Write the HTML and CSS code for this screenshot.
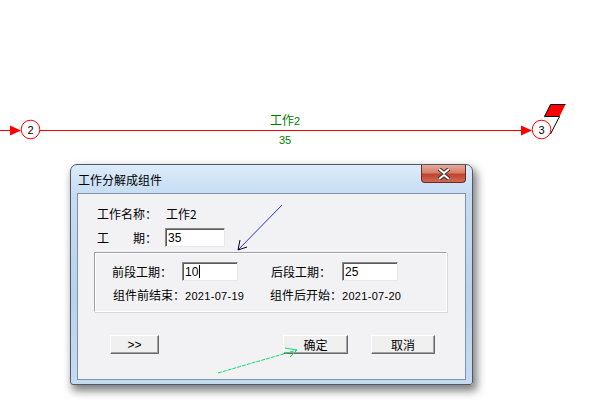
FILE: index.html
```html
<!DOCTYPE html>
<html lang="zh-CN">
<head>
<meta charset="UTF-8">
<title>工作分解成组件</title>
<link rel="stylesheet" href="styles.css">
</head>
<body>

<div class="desk">
    <!-- network diagram -->
    <svg class="net" width="591" height="410" viewBox="0 0 591 410">
        <line x1="0" y1="130.5" x2="12" y2="130.5" stroke="#ff0000" stroke-width="1"/>
        <polygon points="10,125.5 21,130.5 10,135.5" fill="#ff0000"/>
        <line x1="40" y1="130.5" x2="524" y2="130.5" stroke="#ff0000" stroke-width="1"/>
        <polygon points="521,125.5 532,130.5 521,135.5" fill="#ff0000"/>
        <circle cx="30.5" cy="129.5" r="9.3" fill="#fff" stroke="#ff0000" stroke-width="1"/>
        <text x="30.5" y="133.5" class="node-no">2</text>
        <circle cx="541.5" cy="129.5" r="9.3" fill="#fff" stroke="#ff0000" stroke-width="1"/>
        <text x="541.5" y="133.5" class="node-no">3</text>
        <polygon points="550.5,104.5 565.5,104.5 559.5,116.5 544.5,116.5" fill="#ff0000"/>
        <polyline points="544.5,116.5 550.5,104.5 565.5,104.5" fill="none" stroke="#000" stroke-width="1"/>
        <line x1="544.5" y1="116.5" x2="559.5" y2="116.5" stroke="#000" stroke-width="1"/>
        <line x1="559.5" y1="116.5" x2="550.5" y2="134" stroke="#000" stroke-width="1"/>
        <text x="270" y="125" class="job-name">工作<tspan class="job-no">2</tspan></text>
        <text x="279" y="144" class="job-days">35</text>
    </svg>

    <div class="dlg">
        <div class="dlg-title">
            <span class="dlg-caption">工作分解成组件</span>
            <div class="dlg-close">
                <svg width="16" height="12" viewBox="0 0 16 12">
                    <path d="M3 1 L8 5 L13 1 M3 11 L8 7 L13 11" fill="none" stroke="#3a2a2a" stroke-width="4"/>
                    <path d="M3 1 L8 5 L13 1 M3 11 L8 7 L13 11" fill="none" stroke="#fff" stroke-width="2"/>
                </svg>
            </div>
        </div>
        <div class="dlg-body">
            <div class="row">
                <span class="lbl">工作名称：</span>
                <span class="val">工作2</span>
            </div>
            <div class="row">
                <span class="lbl">工　　期：</span>
                <span class="edit edit-wide">35</span>
            </div>

            <div class="grp">
                <div class="grp-row">
                    <span class="lbl-a">前段工期：</span>
                    <span class="edit">10<span class="caret"></span></span>
                    <span class="lbl-b">后段工期：</span>
                    <span class="edit">25</span>
                </div>
                <div class="grp-row grp-dates">
                    <span class="date-a">组件前结束：<span class="num">2021-07-19</span></span>
                    <span>组件后开始：<span class="num">2021-07-20</span></span>
                </div>
            </div>

            <div class="btns">
                <button class="btn btn-more">&gt;&gt;</button>
                <button class="btn btn-ok">确定</button>
                <button class="btn btn-cancel">取消</button>
            </div>
        </div>
    </div>

    <!-- hand drawn hint arrows lying over the dialog -->
    <svg class="marks" width="591" height="410" viewBox="0 0 591 410">
        <line x1="282" y1="205" x2="238" y2="250" stroke="#2a2aff" stroke-width="1"/>
        <polyline points="240,240 238,250 247,247" fill="none" stroke="#000" stroke-width="1"/>
        <line x1="218" y1="373" x2="297" y2="350" stroke="#10e070" stroke-width="1" stroke-dasharray="4 1"/>
        <polyline points="285,348 297,350 290,357" fill="none" stroke="#10e070" stroke-width="1"/>
    </svg>
</div>

</body>
</html>
```

FILE: styles.css
```css
body {
    margin: 0;
    padding: 0;
    background-color: #fff;
    font-family: "Noto Sans CJK SC", "Liberation Sans", sans-serif;
    font-size: 12px;
    color: #000;
}
.desk {
    position: relative;
    width: 591px;
    height: 410px;
    overflow: hidden;
}
.net,
.marks {
    position: absolute;
    left: 0;
    top: 0;
}
.marks {
    pointer-events: none;
}
.node-no {
    font-family: "Liberation Sans", sans-serif;
    font-size: 11px;
    text-anchor: middle;
    fill: #000;
}
.job-name {
    font-family: "Noto Sans CJK SC", sans-serif;
    font-size: 12px;
    fill: #007a00;
}
.job-no {
    font-family: "Liberation Sans", sans-serif;
    font-size: 11px;
}
.job-days {
    font-family: "Liberation Sans", sans-serif;
    font-size: 11px;
    fill: #007a00;
}

/* dialog window */
.dlg {
    position: absolute;
    left: 70px;
    top: 164px;
    width: 403px;
    height: 221px;
    box-sizing: border-box;
    padding: 0 6px 4px 6px;
    border: 1px solid #4d5a68;
    border-radius: 7px 7px 3px 3px;
    background: linear-gradient(180deg, #dcebfa 0%, #c5dcf3 14%, #b9d2ec 60%, #c4dbf2 100%);
    box-shadow: 3px 5px 9px 1px rgba(0, 0, 0, 0.5);
}
.dlg-title {
    display: flex;
    align-items: center;
    height: 28px;
}
.dlg-caption {
    padding-left: 1px;
    color: #000;
}
.dlg-close {
    align-self: flex-start;
    margin-left: auto;
    width: 45px;
    height: 18px;
    box-sizing: border-box;
    border: 1px solid #6b2a22;
    border-top: none;
    border-radius: 0 0 4px 4px;
    background: linear-gradient(180deg, #e7a897 0%, #d7806b 45%, #c0432f 55%, #cf6a52 100%);
    display: flex;
    align-items: center;
    justify-content: center;
}
.dlg-body {
    height: 187px;
    box-sizing: border-box;
    padding: 10px 0 0 19px;
    border: 1px solid #7f93a8;
    background-color: #f2f1f4;
}
.row {
    display: flex;
    align-items: center;
    height: 19px;
    margin-bottom: 5px;
}
.lbl {
    width: 68px;
}
.val {
    padding-left: 1px;
}
.edit {
    display: inline-flex;
    align-items: center;
    width: 56px;
    height: 19px;
    box-sizing: border-box;
    padding-left: 2px;
    border: 1px solid;
    border-color: #8a8a8a #e8e8e8 #e8e8e8 #8a8a8a;
    box-shadow: inset 1px 1px 0 #5a5a5a;
    background-color: #fff;
    font-family: "Liberation Sans", sans-serif;
    font-size: 12px;
}
.edit-wide {
    width: 60px;
}
.caret {
    width: 1px;
    height: 13px;
    margin-left: 1px;
    background-color: #000;
}

/* group box */
.grp {
    width: 353px;
    height: 60px;
    box-sizing: border-box;
    margin: 1px 0 0 -3px;
    padding: 9px 0 0 17px;
    border: 1px solid #a0a0a0;
    border-right-color: #fff;
    border-bottom-color: #fff;
    box-shadow: inset 1px 1px 0 #fff, 1px 1px 0 #d8d8d8;
}
.grp-row {
    display: flex;
    align-items: center;
    height: 19px;
}
.lbl-a {
    width: 70px;
}
.lbl-b {
    width: 71px;
    margin-left: 33px;
}
.grp-dates {
    height: 16px;
    margin-top: 5px;
    padding-left: 1px;
}
.date-a {
    width: 157px;
}
.num {
    font-family: "Liberation Sans", sans-serif;
    font-size: 11px;
    letter-spacing: 0.3px;
}

/* buttons */
.btns {
    display: flex;
    margin: 23px 0 0 13px;
}
.btn {
    height: 19px;
    box-sizing: border-box;
    padding: 0;
    border: 1px solid;
    border-color: #fff #6a6a6a #6a6a6a #fff;
    box-shadow: inset -1px -1px 0 #a0a0a0;
    background-color: #f0f0f0;
    font-family: "Noto Sans CJK SC", sans-serif;
    font-size: 12px;
    color: #000;
    line-height: 16px;
}
.btn-more {
    width: 49px;
    font-family: "Liberation Sans", sans-serif;
}
.btn-ok {
    width: 65px;
    margin-left: 124px;
}
.btn-cancel {
    width: 64px;
    margin-left: 23px;
}
```
